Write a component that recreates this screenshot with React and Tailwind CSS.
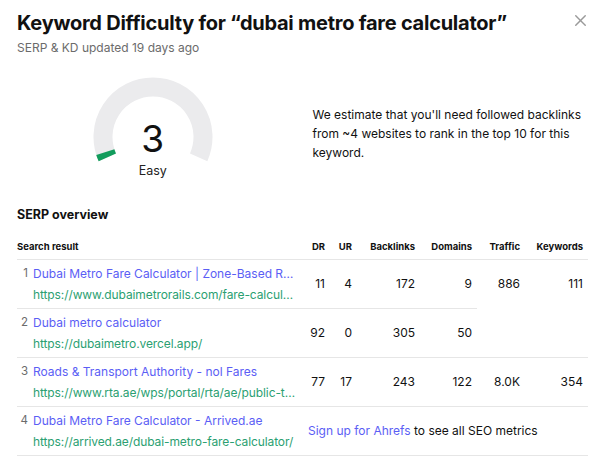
import { X } from "lucide-react";

const rows = [
  {
    n: 1,
    title: "Dubai Metro Fare Calculator | Zone-Based Rates & Nol Card Guide",
    url: "https://www.dubaimetrorails.com/fare-calculator/",
    dr: 11,
    ur: 4,
    backlinks: 172,
    domains: 9,
    traffic: "886",
    keywords: 111,
    span: true,
  },
  {
    n: 2,
    title: "Dubai metro calculator",
    url: "https://dubaimetro.vercel.app/",
    dr: 92,
    ur: 0,
    backlinks: 305,
    domains: 50,
    covered: true,
  },
  {
    n: 3,
    title: "Roads & Transport Authority - nol Fares",
    url: "https://www.rta.ae/wps/portal/rta/ae/public-transport/nol",
    dr: 77,
    ur: 17,
    backlinks: 243,
    domains: 122,
    traffic: "8.0K",
    keywords: 354,
  },
];

function Gauge() {
  const cx = 60;
  const cy = 61;
  const r = 50;
  const pt = (deg) => {
    const a = (deg * Math.PI) / 180;
    return [cx + r * Math.cos(a), cy - r * Math.sin(a)];
  };
  const [sx, sy] = pt(204);
  const [ex, ey] = pt(-24);
  const [gx, gy] = pt(197.5);
  return (
    <div className="relative w-[120px] h-[104px]">
      <svg width="120" height="104" viewBox="0 0 120 104">
        <path
          d={`M ${sx} ${sy} A ${r} ${r} 0 1 1 ${ex} ${ey}`}
          fill="none"
          stroke="#ebebed"
          strokeWidth="19"
        />
        <path
          d={`M ${sx} ${sy} A ${r} ${r} 0 0 1 ${gx} ${gy}`}
          fill="none"
          stroke="#129c5c"
          strokeWidth="19"
        />
      </svg>
      <div className="absolute inset-x-0 top-[43px] text-center text-[37px] leading-[40px] text-[#111]">3</div>
      <div className="absolute inset-x-0 top-[87px] text-center text-[12.5px] leading-[16px] text-[#222]">Easy</div>
    </div>
  );
}

function Result({ n, title, url }) {
  return (
    <div className="flex">
      <span className="w-[11px] text-right text-[11.5px] leading-[21px] text-[#6b6b6b] shrink-0">{n}</span>
      <div className="ml-[5px] min-w-0 w-[266px]">
        <div className="truncate leading-[21px] text-[#5b5ef5]">{title}</div>
        <div className="truncate leading-[21px] text-[#2b9f72] tracking-[-0.1px]">{url}</div>
      </div>
    </div>
  );
}

export default function App() {
  return (
    <div className="w-[605px] h-[458px] bg-white px-[17px] font-['Inter',sans-serif] text-[#111] overflow-hidden relative">
      <button className="absolute right-[15px] top-[11px] text-[#9a9a9a]">
        <X size={19} strokeWidth={1.8} />
      </button>

      <h1 className="pt-[10px] text-[20px] leading-[26px] font-bold tracking-[-0.25px]">
        Keyword Difficulty for “dubai metro fare calculator”
      </h1>
      <p className="mt-[4px] text-[12px] leading-[16px] text-[#6b6b6b]">SERP &amp; KD updated 19 days ago</p>

      <div className="flex items-start mt-[20px]">
        <div className="w-[272px] flex justify-center">
          <Gauge />
        </div>
        <p className="ml-[24px] mt-[29px] w-[276px] text-[12px] leading-[19px] text-[#111]">
          We estimate that you'll need followed backlinks from ~4 websites to rank in the top 10 for this keyword.
        </p>
      </div>

      <h2 className="mt-[27px] text-[12.5px] leading-[16px] font-bold">SERP overview</h2>

      <table className="mt-[16px] w-[571px] table-fixed border-collapse text-[12px]">
        <colgroup>
          <col className="w-[286px]" />
          <col className="w-[27px]" />
          <col className="w-[27px]" />
          <col className="w-[63px]" />
          <col className="w-[57px]" />
          <col className="w-[48px]" />
          <col className="w-[63px]" />
        </colgroup>
        <thead>
          <tr className="border-b border-[#e6e6e6] text-[9.5px] leading-[15px] font-bold">
            <th className="text-left font-bold h-[20px] align-top">Search result</th>
            <th className="text-right pr-[5px] align-top">DR</th>
            <th className="text-right pr-[5px] align-top">UR</th>
            <th className="text-right pr-[5px] align-top">Backlinks</th>
            <th className="text-right pr-[5px] align-top">Domains</th>
            <th className="text-right pr-[5px] align-top">Traffic</th>
            <th className="text-right pr-[5px] align-top">Keywords</th>
          </tr>
        </thead>
        <tbody>
          {rows.map((r) => (
            <tr key={r.n} className="border-b border-[#e6e6e6]">
              <td className="h-[49px] align-middle">
                <Result n={r.n} title={r.title} url={r.url} />
              </td>
              <td className="text-right pr-[5px]">{r.dr}</td>
              <td className="text-right pr-[5px]">{r.ur}</td>
              <td className="text-right pr-[5px]">{r.backlinks}</td>
              <td className="text-right pr-[5px]">{r.domains}</td>
              {r.covered ? null : (
                <>
                  <td rowSpan={r.span ? 2 : 1} className="text-right pr-[5px] align-top pt-[15px]">{r.traffic}</td>
                  <td rowSpan={r.span ? 2 : 1} className="text-right pr-[5px] align-top pt-[15px]">{r.keywords}</td>
                </>
              )}
            </tr>
          ))}
          <tr className="border-b border-[#e6e6e6]">
            <td className="h-[49px] align-middle">
              <Result
                n={4}
                title="Dubai Metro Fare Calculator - Arrived.ae"
                url="https://arrived.ae/dubai-metro-fare-calculator/"
              />
            </td>
            <td colSpan={6} className="pl-[5px]">
              <span className="text-[#5b5ef5]">Sign up for Ahrefs</span> to see all SEO metrics
            </td>
          </tr>
        </tbody>
      </table>
    </div>
  );
}
